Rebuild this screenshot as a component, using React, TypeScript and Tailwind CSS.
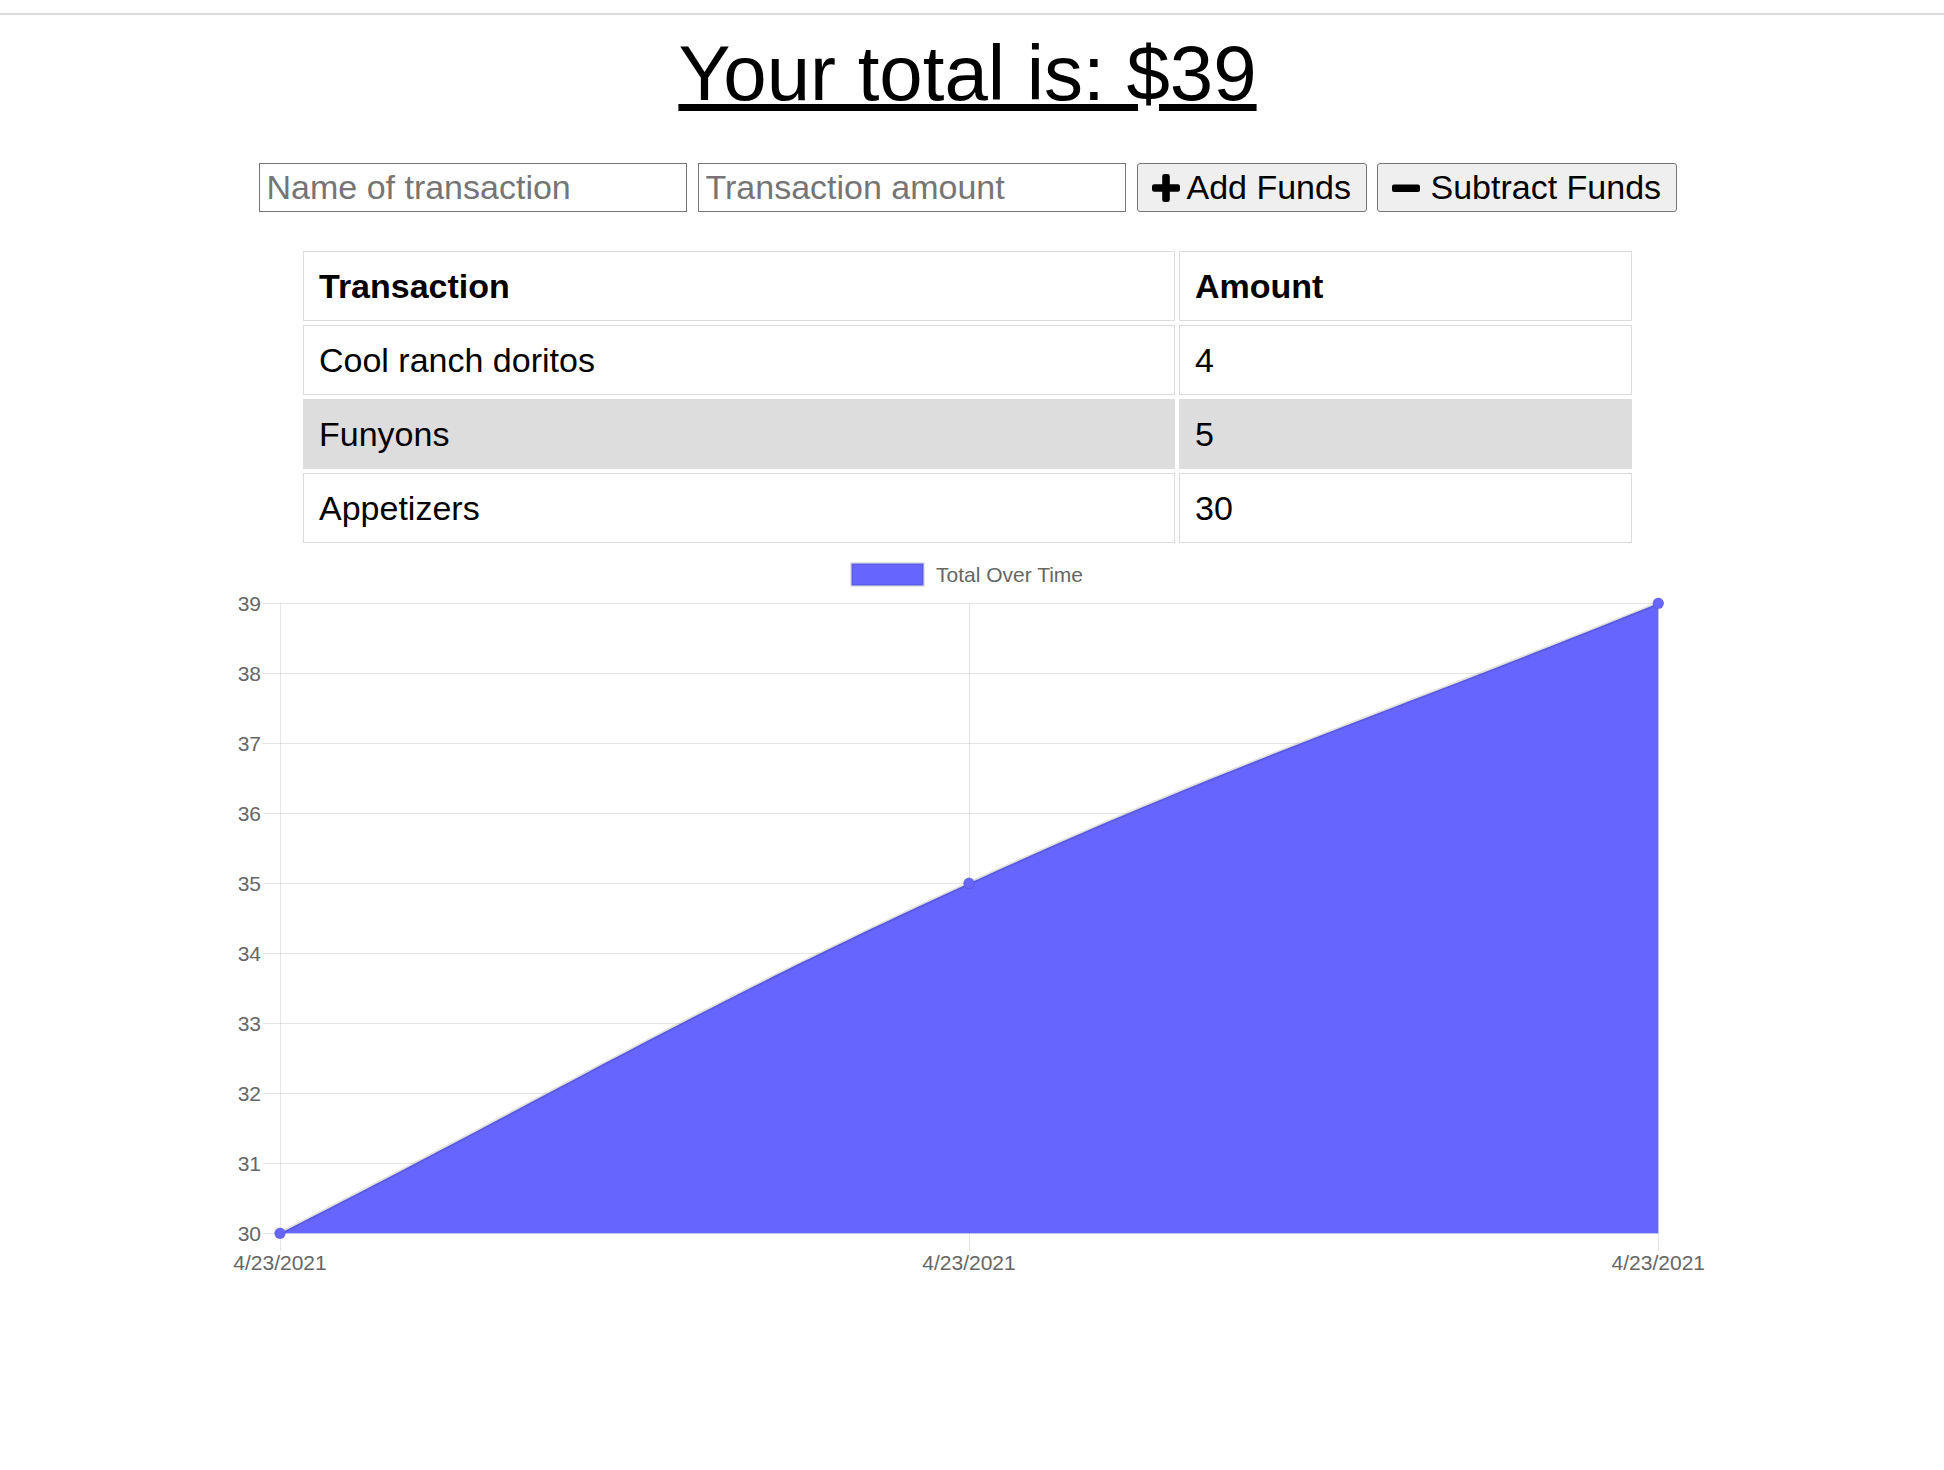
import React from 'react';

const rows = [
  { name: 'Cool ranch doritos', amount: 4 },
  { name: 'Funyons', amount: 5 },
  { name: 'Appetizers', amount: 30 },
];

const yTicks = [39, 38, 37, 36, 35, 34, 33, 32, 31, 30];
const xTicks = [280, 969, 1658.3];

function PlusIcon() {
  return (
    <svg width="28" height="28" viewBox="0 0 28 28" className="mr-[7px] shrink-0">
      <path d="M10.2 2.2 Q10.2 0 12.4 0 H15.6 Q17.8 0 17.8 2.2 V10.2 H25.8 Q28 10.2 28 12.4 V15.6 Q28 17.8 25.8 17.8 H17.8 V25.8 Q17.8 28 15.6 28 H12.4 Q10.2 28 10.2 25.8 V17.8 H2.2 Q0 17.8 0 15.6 V12.4 Q0 10.2 2.2 10.2 H10.2 Z" fill="#000" />
    </svg>
  );
}

function MinusIcon() {
  return (
    <svg width="28" height="8" viewBox="0 0 28 8" className="mr-[11px] shrink-0">
      <rect x="0" y="0.5" width="28" height="7.5" rx="2" fill="#000" />
    </svg>
  );
}

function Chart() {
  const area =
    'M280,1234.3 C555.6,1094.3 688.2,1012.5 969,884.3 C1239.5,760.8 1382.6,716.3 1658.3,604.3';
  return (
    <svg width="1935" height="742" viewBox="0 548 1935 742" className="block">
      {/* legend */}
      <rect x="851.5" y="564.5" width="72" height="22" fill="#6666ff" stroke="rgba(0,0,0,0.1)" strokeWidth="3" />
      <text x="936" y="582.5" fontSize="21" fill="#666" fontFamily="'Liberation Sans', Arial, sans-serif">
        Total Over Time
      </text>

      {/* grid */}
      {yTicks.map((t, i) => {
        const y = 604.5 + i * 70;
        return (
          <g key={t}>
            <line x1="263" x2="1658.5" y1={y} y2={y} stroke="rgba(0,0,0,0.1)" strokeWidth="1" />
            <text x="261" y={y + 7.5} textAnchor="end" fontSize="21" fill="#666" fontFamily="'Liberation Sans', Arial, sans-serif">
              {t}
            </text>
          </g>
        );
      })}
      {xTicks.map((x) => (
        <g key={x}>
          <line x1={Math.round(x) + 0.5} x2={Math.round(x) + 0.5} y1="604" y2="1252" stroke="rgba(0,0,0,0.1)" strokeWidth="1" />
          <text x={x} y="1271" textAnchor="middle" fontSize="21" fill="#666" fontFamily="'Liberation Sans', Arial, sans-serif">
            4/23/2021
          </text>
        </g>
      ))}

      {/* dataset */}
      <path d={`${area} L1658.3,1234.3 Z`} fill="#6666ff" />
      <path d={area} fill="none" stroke="rgba(0,0,0,0.12)" strokeWidth="3.5" />
      <circle cx="280" cy="1234.3" r="5.5" fill="#6666ff" stroke="rgba(0,0,0,0.1)" strokeWidth="1" />
      <circle cx="969" cy="884.3" r="5.5" fill="#6666ff" stroke="rgba(0,0,0,0.1)" strokeWidth="1" />
      <circle cx="1658.3" cy="604.3" r="5.5" fill="#6666ff" stroke="rgba(0,0,0,0.1)" strokeWidth="1" />
    </svg>
  );
}

export default function App() {
  return (
    <div className="min-h-screen bg-white pt-[13px] font-['Liberation_Sans',Arial,sans-serif] text-black">
      <div className="h-[2px] bg-[#dcdcdc]" />

      <div className="w-[1935px] flex flex-col items-center">
        <h1 className="mt-[19px] text-[78px] leading-[78px] underline">Your total is: $39</h1>

        <div className="mt-[51px] flex items-center text-[34px]">
          <input
            type="text"
            placeholder="Name of transaction"
            className="w-[428px] h-[49px] border border-[#767676] px-[7px] outline-none placeholder:text-[#757575]"
          />
          <input
            type="number"
            placeholder="Transaction amount"
            className="ml-[11px] w-[428px] h-[49px] border border-[#767676] px-[7px] outline-none placeholder:text-[#757575]"
          />
          <button className="ml-[11px] w-[230px] h-[49px] flex items-center bg-[#efefef] border border-[#767676] rounded-[3px] px-[14px]">
            <PlusIcon />
            Add Funds
          </button>
          <button className="ml-[10px] w-[300px] h-[49px] flex items-center bg-[#efefef] border border-[#767676] rounded-[3px] px-[14px]">
            <MinusIcon />
            Subtract Funds
          </button>
        </div>

        <table className="mt-[35px] w-[1337px] border-separate border-spacing-[4px] text-[34px] table-fixed">
          <thead>
            <tr>
              <th className="w-[872px] h-[70px] border border-[#dcdcdc] px-[15px] text-left font-bold">Transaction</th>
              <th className="h-[70px] border border-[#dcdcdc] px-[15px] text-left font-bold">Amount</th>
            </tr>
          </thead>
          <tbody>
            {rows.map((r, i) => (
              <tr key={r.name} className={i === 1 ? 'bg-[#dddddd]' : ''}>
                <td className={`h-[70px] border ${i === 1 ? 'border-[#dddddd]' : 'border-[#dcdcdc]'} px-[15px]`}>{r.name}</td>
                <td className={`h-[70px] border ${i === 1 ? 'border-[#dddddd]' : 'border-[#dcdcdc]'} px-[15px]`}>{r.amount}</td>
              </tr>
            ))}
          </tbody>
        </table>

        <Chart />
      </div>
    </div>
  );
}
